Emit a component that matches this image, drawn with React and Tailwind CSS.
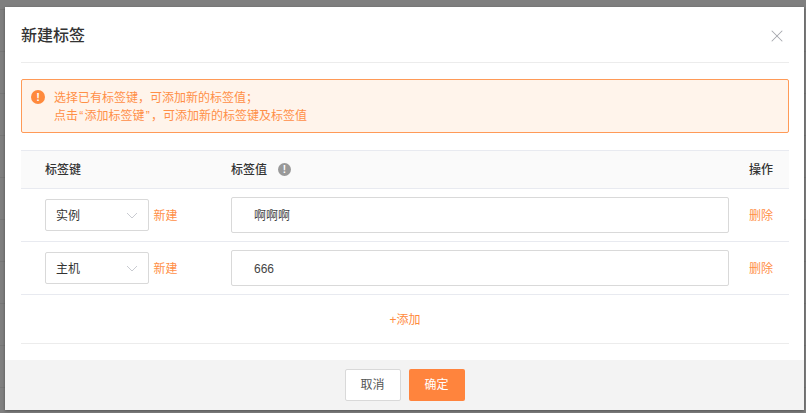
// Import Dependencies
import { X } from "lucide-react";

const font = { fontFamily: '"Liberation Sans", "Noto Sans CJK SC", sans-serif' };

const rows = [
  { key: "实例", value: "啊啊啊" },
  { key: "主机", value: "666" },
];

function Chevron() {
  return (
    <svg width="12" height="7" viewBox="0 0 12 7" fill="none" className="text-[#c9cbd1]">
      <path d="M1 1l5 5 5-5" stroke="currentColor" strokeWidth="1" />
    </svg>
  );
}

function TagRow({ row }) {
  return (
    <div className="flex h-[53px] items-center border-b border-[#e8eaf0]">
      <div className="flex w-[210px] items-center pl-6">
        <div className="flex h-8 w-[104px] items-center justify-between rounded-[2px] border border-[#d9d9d9] pl-[10px] pr-[10px] text-xs text-[#333]">
          <span className="pt-[1px]">{row.key}</span>
          <Chevron />
        </div>
        <span className="ml-[4.5px] pt-[1px] text-xs text-[#ff8f47]">新建</span>
      </div>
      <div className="w-[498px]">
        <div className="flex h-9 items-center rounded-[2px] border border-[#d9d9d9] pl-[22px] pt-[1px] text-xs text-[#444]">
          {row.value}
        </div>
      </div>
      <div className="flex-1 pr-4 pt-[1px] text-right text-xs text-[#ff8f47]">删除</div>
    </div>
  );
}

export default function App() {
  return (
    <div
      className="h-[413px] w-[806px] overflow-hidden bg-[#7f7f7f] bg-[repeating-linear-gradient(to_bottom,#7f7f7f_0px,#7f7f7f_9px,#777777_9px,#777777_10px,#7f7f7f_10px,#7f7f7f_42px)] pl-[5px] pt-[7px]"
      style={font}
    >
      <div className="flex h-[403px] w-[799px] flex-col bg-white shadow-[0_1px_3px_rgba(0,0,0,0.35)]">
        {/* Header */}
        <div className="flex h-[55px] shrink-0 items-center justify-between pl-[16px] pr-[17px] pt-[2px]">
          <h1 className="text-base font-medium text-[#333]">新建标签</h1>
          <X className="h-5 w-5 text-[#a6a8ae]" strokeWidth={1.25} />
        </div>

        <div className="ml-4 mr-[15px] flex-1">
          <div className="border-t border-[#ececec]" />

          {/* Alert */}
          <div className="mt-4 flex h-[54px] gap-[9px] rounded-[2px] border border-[#ff9a57] bg-[#fff4eb] pl-[9px] pt-[9px] text-xs leading-[18px] text-[#ff8f47]">
            <span className="mt-[1px] flex h-[14px] w-[14px] shrink-0 items-center justify-center rounded-full bg-[#ff8a3d] text-[11px] font-bold leading-none text-white">
              !
            </span>
            <p>
              选择已有标签键，可添加新的标签值；
              <br />
              点击<span className="px-[1.25px]">“</span>添加标签键<span className="px-[1.25px]">”</span>，可添加新的标签键及标签值
            </p>
          </div>

          {/* Table */}
          <div className="mt-[17px] flex h-[39px] items-center border-y border-[#e8eaf0] bg-[#fafafa] text-xs font-medium text-[#333]">
            <div className="w-[210px] pl-6">标签键</div>
            <div className="flex w-[498px] items-center gap-[11px]">
              <span>标签值</span>
              <span className="flex h-[13px] w-[13px] items-center justify-center rounded-full bg-[#999] text-[10px] font-bold leading-none text-white">
                !
              </span>
            </div>
            <div className="flex-1 pr-4 text-right">操作</div>
          </div>
          {rows.map((row) => (
            <TagRow key={row.key} row={row} />
          ))}
          <div className="flex h-[49px] items-center justify-center border-b border-[#ececec] pt-[1px] text-xs text-[#ff8a3d]">
            +添加
          </div>
        </div>

        {/* Footer */}
        <div className="flex h-[50px] shrink-0 items-center justify-center gap-2 bg-[#f3f3f3]">
          <button className="h-8 w-14 rounded-[2px] border border-[#d9d9d9] bg-white text-xs text-[#555]">取消</button>
          <button className="h-8 w-14 rounded-[2px] bg-[#ff843d] text-xs text-white">确定</button>
        </div>
      </div>
    </div>
  );
}
